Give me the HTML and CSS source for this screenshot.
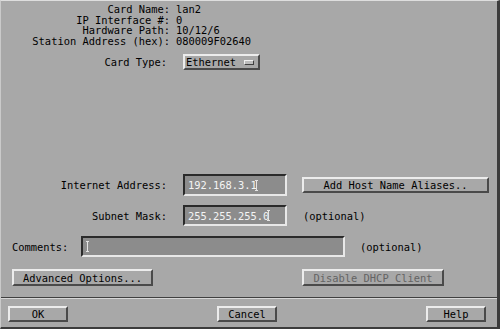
FILE: index.html
```html
<!DOCTYPE html>
<html>
<head>
    <meta charset="UTF-8">
    <title>Configure LAN Card</title>
    <link rel="stylesheet" href="styles.css">
</head>
<body>
    <div class="dialog">
        <div class="info">
            <span class="info-label">Card Name:</span><span>lan2</span>
            <span class="info-label">IP Interface #:</span><span>0</span>
            <span class="info-label">Hardware Path:</span><span>10/12/6</span>
            <span class="info-label">Station Address (hex):</span><span>080009F02640</span>
        </div>

        <div class="row card-type">
            <span class="label">Card Type:</span>
            <button class="btn option-menu">Ethernet<span class="indicator"></span></button>
        </div>

        <div class="form">
            <div class="row row-internet">
                <span class="label">Internet Address:</span>
                <div class="field field-short">192.168.3.1<span class="caret"></span></div>
                <button class="btn btn-aliases">Add Host Name Aliases..</button>
            </div>
            <div class="row row-subnet">
                <span class="label">Subnet Mask:</span>
                <div class="field field-short">255.255.255.0<span class="caret"></span></div>
                <span class="hint">(optional)</span>
            </div>
            <div class="row row-comments">
                <span class="label-left">Comments:</span>
                <div class="field field-long"><span class="caret caret-start"></span></div>
                <span class="hint hint-comments">(optional)</span>
            </div>
        </div>

        <div class="row options">
            <button class="btn btn-advanced">Advanced Options...</button>
            <button class="btn btn-dhcp" disabled>Disable DHCP Client</button>
        </div>

        <div class="separator"></div>

        <div class="footer">
            <button class="btn btn-footer">OK</button>
            <button class="btn btn-footer">Cancel</button>
            <button class="btn btn-footer">Help</button>
        </div>
    </div>
</body>
</html>
```

FILE: styles.css
```css
body {
    margin: 0;
    font-family: "DejaVu Sans Mono", "Liberation Mono", monospace;
    font-size: 10.4px;
    color: #000;
}

.dialog {
    box-sizing: border-box;
    width: 500px;
    height: 329px;
    background-color: #a8a8a8;
    border-style: solid;
    border-width: 1px 3px 2px 1px;
    border-color: #dedede #3c3c3c #3c3c3c #cacaca;
}

/* card details at the top */
.info {
    display: grid;
    grid-template-columns: 169px auto;
    grid-auto-rows: 10.5px;
    column-gap: 6px;
    line-height: 10.5px;
    padding-top: 3px;
}

.info-label {
    text-align: right;
}

.row {
    display: flex;
    align-items: center;
}

.label {
    width: 166px;
    flex: none;
    text-align: right;
    margin-right: 16px;
}

.card-type {
    margin-top: 8px;
    height: 16px;
}

/* buttons */
.btn {
    box-sizing: border-box;
    margin: 0;
    padding: 0;
    font-family: inherit;
    font-size: inherit;
    color: #000;
    background-color: #a8a8a8;
    border-style: solid;
    border-width: 2px;
    border-color: #ececec #4a4a4a #4a4a4a #ececec;
    cursor: pointer;
}

.option-menu {
    width: 77px;
    height: 16px;
    display: flex;
    align-items: center;
    padding-left: 1px;
}

.indicator {
    box-sizing: border-box;
    width: 10px;
    height: 5px;
    margin-left: auto;
    margin-right: 4px;
    background-color: #bcbcbc;
    border-style: solid;
    border-width: 1px;
    border-color: #f0f0f0 #404040 #404040 #f0f0f0;
}

/* text fields */
.form {
    margin-top: 104px;
}

.field {
    box-sizing: border-box;
    flex: none;
    display: flex;
    align-items: center;
    padding-left: 3px;
    color: #f4f4f4;
    background-color: #8c8c8c;
    border-style: solid;
    border-width: 2px;
    border-color: #2a2a2a #e8e8e8 #e8e8e8 #2a2a2a;
}

.field-short {
    width: 104px;
}

.field-long {
    width: 264px;
    margin-left: 13px;
}

.caret {
    box-sizing: border-box;
    width: 3px;
    height: 11px;
    margin-left: -2px;
    border-top: 1px solid #e4e4e4;
    border-bottom: 1px solid #e4e4e4;
    background: linear-gradient(#e4e4e4, #e4e4e4) center / 1px 100% no-repeat;
}

.caret-start {
    margin-left: 0;
}

.row-internet {
    height: 22px;
}

.row-internet .field {
    height: 22px;
}

.btn-aliases {
    width: 187px;
    height: 16px;
    margin-left: 15px;
}

.row-subnet {
    margin-top: 9px;
    height: 21px;
}

.row-subnet .field {
    height: 21px;
}

.hint {
    margin-left: 16px;
}

.row-comments {
    margin-top: 10px;
    height: 21px;
}

.row-comments .field {
    height: 21px;
}

.label-left {
    margin-left: 11px;
    width: 56px;
}

.hint-comments {
    margin-left: 15px;
}

.options {
    margin-top: 12px;
    padding-left: 11px;
}

.btn-advanced {
    width: 141px;
    height: 17px;
}

.btn-dhcp {
    width: 142px;
    height: 17px;
    margin-left: 149px;
    color: #646464;
    cursor: default;
}

.separator {
    margin-top: 11px;
    height: 1px;
    background-color: #404040;
    border-bottom: 1px solid #d6d6d6;
}

.footer {
    display: flex;
    justify-content: space-between;
    margin-top: 7px;
    padding: 0 11px 0 7px;
}

.btn-footer {
    width: 60px;
    height: 16px;
}
```
